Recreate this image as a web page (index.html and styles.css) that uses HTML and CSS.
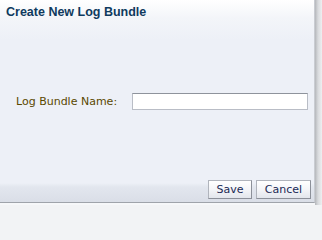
FILE: index.html
```html
<!DOCTYPE html>
<html>
<head>
<meta charset="utf-8">
<link rel="stylesheet" href="styles.css">
</head>
<body>
<div class="frame">
  <div class="dialog">
    <div class="title">Create New Log Bundle</div>
    <div class="body">
      <div class="row">
        <label class="label" for="name">Log Bundle Name:</label>
        <input class="field" id="name" type="text">
      </div>
    </div>
    <div class="footer">
      <button class="btn btn-save">Save</button>
      <button class="btn btn-cancel">Cancel</button>
    </div>
  </div>
</div>
</body>
</html>
```
FILE: styles.css
```css
html, body {
  margin: 0;
  padding: 0;
  background: #f2f3f5;
}
.frame {
  width: 322px;
  height: 205px;
  overflow: hidden;
  background: linear-gradient(to right, #f6f7f9 0, #f6f7f9 315px, #b5b7bb 315px, #d8dadd 318px, #eeeff1 322px);
}
.dialog {
  width: 315px;
  height: 203px;
  box-sizing: border-box;
  border-right: 1px solid #c9ccd2;
  border-bottom: 1px solid #9fa3aa;
  background: linear-gradient(to bottom, #ffffff 0, #f3f5f9 18px, #edf0f7 40px, #edf0f7 100%);
  display: flex;
  flex-direction: column;
  font-family: "DejaVu Sans", Verdana, sans-serif;
}
.title {
  padding: 5px 0 0 6px;
  height: 22px;
  box-sizing: border-box;
  font-family: "Liberation Sans", Arial, sans-serif;
  font-weight: bold;
  font-size: 12.5px;
  color: #0f3a5e;
}
.body {
  flex: 1;
  display: flex;
  flex-direction: column;
  justify-content: flex-start;
}
.row {
  display: flex;
  align-items: center;
  margin-top: 71px;
  padding-left: 16px;
}
.label {
  font-size: 11px;
  color: #5a4800;
  width: 116px;
}
.field {
  width: 176px;
  height: 17px;
  box-sizing: border-box;
  border: 1px solid #b9bdc6;
  border-top-color: #8e939c;
  background: #ffffff;
  margin: 0;
  padding: 0;
}
.footer {
  height: 31px;
  box-sizing: border-box;
  display: flex;
  justify-content: flex-end;
  align-items: flex-start;
  gap: 4px;
  padding: 9px 3px 0 0;
  background: linear-gradient(to bottom, #edf0f7 0, #edf0f7 12px, #e2e6ee 16px, #dadee7 100%);
}
.btn {
  height: 19px;
  box-sizing: border-box;
  margin: 0;
  padding: 0;
  font-family: "DejaVu Sans", Verdana, sans-serif;
  font-size: 11px;
  color: #1a2a55;
  border: 1px solid #b0b4bc;
  border-right-color: #8c9099;
  border-bottom-color: #8c9099;
  background: linear-gradient(to bottom, #ffffff 0, #f4f5f8 50%, #e3e6ec 100%);
}
.btn-save { width: 44px; }
.btn-cancel { width: 55px; }
```
